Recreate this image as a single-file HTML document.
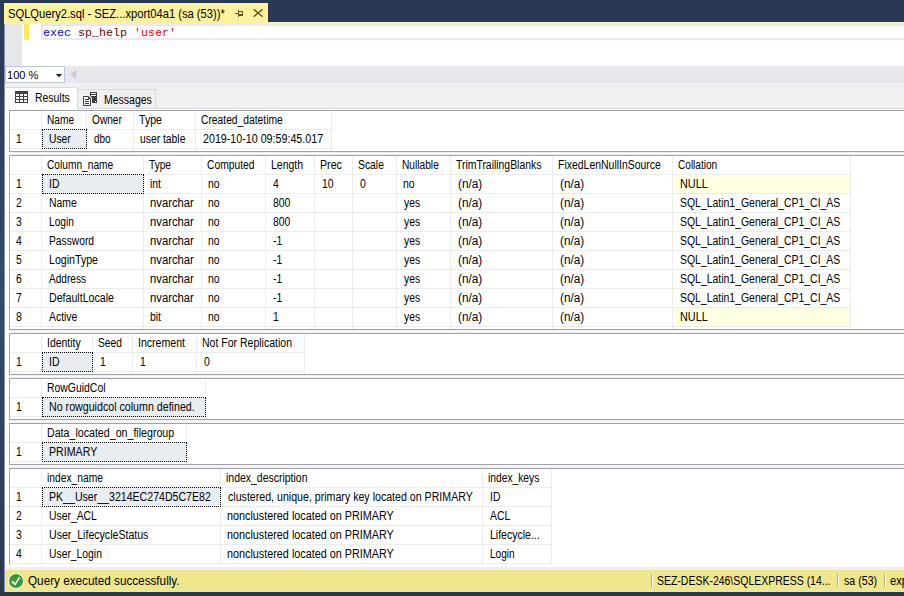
<!DOCTYPE html><html><head><meta charset="utf-8"><title>SQLQuery2.sql</title><style>
html,body{margin:0;padding:0;}body{width:904px;height:596px;overflow:hidden;position:relative;background:#fff;}
.r{position:absolute;}
.t{position:absolute;white-space:pre;line-height:1;transform-origin:0 50%;display:block;}
</style></head><body>
<div class="r" style="left:0px;top:0px;width:904px;height:22px;background:#293955;"></div>
<div class="r" style="left:4px;top:3px;width:264px;height:19px;background:#FFF29D;"></div>
<div class="r" style="left:4px;top:22px;width:900px;height:2px;background:#FFF29D;"></div>
<div class="r" style="left:4px;top:24px;width:900px;height:42px;background:#FFFFFF;"></div>
<div class="r" style="left:4px;top:24px;width:18px;height:42px;background:#E6E7E8;"></div>
<div class="r" style="left:24.3px;top:24px;width:5.2px;height:16px;background:#FFEC5E;"></div>
<div class="r" style="left:41px;top:24px;width:867px;height:16px;background:transparent;border:2px solid #E8E8F3;box-sizing:border-box;"></div>
<div class="r" style="left:4px;top:66px;width:900px;height:17px;background:#E7E7EC;"></div>
<div class="r" style="left:5px;top:66px;width:60px;height:17px;background:#FFFFFF;border:1px solid #BEC7DD;box-sizing:border-box;"></div>
<div class="r" style="left:4px;top:83px;width:900px;height:487px;background:#F0F0F0;"></div>
<div class="r" style="left:5px;top:109px;width:899px;height:461px;background:#FFFFFF;"></div>
<div class="r" style="left:5px;top:87px;width:73px;height:22px;background:#FFFFFF;border:1px solid #DADADA;border-bottom:none;border-left-color:#F4F4F4;box-sizing:border-box;"></div>
<div class="r" style="left:78px;top:89px;width:78px;height:20px;background:#F0F0F0;border:1px solid #DADADA;border-left:none;box-sizing:border-box;"></div>
<div class="r" style="left:156px;top:108px;width:748px;height:1px;background:#DDDDDD;"></div>
<div class="r" style="left:9px;top:110px;width:897px;height:42px;background:#FFFFFF;border:1px solid #A0A3AB;box-sizing:border-box;"></div>
<div class="r" style="left:10px;top:129px;width:322px;height:1px;background:#EDEDED;"></div>
<div class="r" style="left:10px;top:148px;width:322px;height:1px;background:#EDEDED;"></div>
<div class="r" style="left:41px;top:111px;width:1px;height:40px;background:#EDEDED;"></div>
<div class="r" style="left:86px;top:111px;width:1px;height:40px;background:#EDEDED;"></div>
<div class="r" style="left:133px;top:111px;width:1px;height:40px;background:#EDEDED;"></div>
<div class="r" style="left:195px;top:111px;width:1px;height:40px;background:#EDEDED;"></div>
<div class="r" style="left:331px;top:111px;width:1px;height:40px;background:#EDEDED;"></div>
<div class="r" style="left:9px;top:152px;width:895px;height:3px;background:#F0F0F0;"></div>
<div class="r" style="left:9px;top:153px;width:895px;height:1px;background:#FAFAFA;"></div>
<div class="r" style="left:42px;top:129px;width:45px;height:20px;background:#E8EDF1;border:1px dotted #000;box-sizing:border-box;"></div>
<div class="r" style="left:9px;top:155px;width:897px;height:175px;background:#FFFFFF;border:1px solid #A0A3AB;box-sizing:border-box;"></div>
<div class="r" style="left:10px;top:174px;width:841px;height:1px;background:#EDEDED;"></div>
<div class="r" style="left:10px;top:193px;width:841px;height:1px;background:#EDEDED;"></div>
<div class="r" style="left:10px;top:212px;width:841px;height:1px;background:#EDEDED;"></div>
<div class="r" style="left:10px;top:231px;width:841px;height:1px;background:#EDEDED;"></div>
<div class="r" style="left:10px;top:250px;width:841px;height:1px;background:#EDEDED;"></div>
<div class="r" style="left:10px;top:269px;width:841px;height:1px;background:#EDEDED;"></div>
<div class="r" style="left:10px;top:288px;width:841px;height:1px;background:#EDEDED;"></div>
<div class="r" style="left:10px;top:307px;width:841px;height:1px;background:#EDEDED;"></div>
<div class="r" style="left:10px;top:326px;width:841px;height:1px;background:#EDEDED;"></div>
<div class="r" style="left:41px;top:156px;width:1px;height:173px;background:#EDEDED;"></div>
<div class="r" style="left:143px;top:156px;width:1px;height:173px;background:#EDEDED;"></div>
<div class="r" style="left:201px;top:156px;width:1px;height:173px;background:#EDEDED;"></div>
<div class="r" style="left:265px;top:156px;width:1px;height:173px;background:#EDEDED;"></div>
<div class="r" style="left:314px;top:156px;width:1px;height:173px;background:#EDEDED;"></div>
<div class="r" style="left:352px;top:156px;width:1px;height:173px;background:#EDEDED;"></div>
<div class="r" style="left:396px;top:156px;width:1px;height:173px;background:#EDEDED;"></div>
<div class="r" style="left:450px;top:156px;width:1px;height:173px;background:#EDEDED;"></div>
<div class="r" style="left:552px;top:156px;width:1px;height:173px;background:#EDEDED;"></div>
<div class="r" style="left:672px;top:156px;width:1px;height:173px;background:#EDEDED;"></div>
<div class="r" style="left:850px;top:156px;width:1px;height:173px;background:#EDEDED;"></div>
<div class="r" style="left:9px;top:330px;width:895px;height:3px;background:#F0F0F0;"></div>
<div class="r" style="left:9px;top:331px;width:895px;height:1px;background:#FAFAFA;"></div>
<div class="r" style="left:673px;top:175px;width:177px;height:18px;background:#FFFFE1;"></div>
<div class="r" style="left:673px;top:308px;width:177px;height:18px;background:#FFFFE1;"></div>
<div class="r" style="left:42px;top:174px;width:102px;height:20px;background:#E8EDF1;border:1px dotted #000;box-sizing:border-box;"></div>
<div class="r" style="left:9px;top:333px;width:897px;height:42px;background:#FFFFFF;border:1px solid #A0A3AB;box-sizing:border-box;"></div>
<div class="r" style="left:10px;top:352px;width:295px;height:1px;background:#EDEDED;"></div>
<div class="r" style="left:10px;top:371px;width:295px;height:1px;background:#EDEDED;"></div>
<div class="r" style="left:41px;top:334px;width:1px;height:40px;background:#EDEDED;"></div>
<div class="r" style="left:92px;top:334px;width:1px;height:40px;background:#EDEDED;"></div>
<div class="r" style="left:132px;top:334px;width:1px;height:40px;background:#EDEDED;"></div>
<div class="r" style="left:196px;top:334px;width:1px;height:40px;background:#EDEDED;"></div>
<div class="r" style="left:304px;top:334px;width:1px;height:40px;background:#EDEDED;"></div>
<div class="r" style="left:9px;top:375px;width:895px;height:3px;background:#F0F0F0;"></div>
<div class="r" style="left:9px;top:376px;width:895px;height:1px;background:#FAFAFA;"></div>
<div class="r" style="left:42px;top:352px;width:51px;height:20px;background:#E8EDF1;border:1px dotted #000;box-sizing:border-box;"></div>
<div class="r" style="left:9px;top:378px;width:897px;height:42px;background:#FFFFFF;border:1px solid #A0A3AB;box-sizing:border-box;"></div>
<div class="r" style="left:10px;top:397px;width:196px;height:1px;background:#EDEDED;"></div>
<div class="r" style="left:10px;top:416px;width:196px;height:1px;background:#EDEDED;"></div>
<div class="r" style="left:41px;top:379px;width:1px;height:40px;background:#EDEDED;"></div>
<div class="r" style="left:205px;top:379px;width:1px;height:40px;background:#EDEDED;"></div>
<div class="r" style="left:9px;top:420px;width:895px;height:3px;background:#F0F0F0;"></div>
<div class="r" style="left:9px;top:421px;width:895px;height:1px;background:#FAFAFA;"></div>
<div class="r" style="left:42px;top:397px;width:164px;height:20px;background:#E8EDF1;border:1px dotted #000;box-sizing:border-box;"></div>
<div class="r" style="left:9px;top:423px;width:897px;height:42px;background:#FFFFFF;border:1px solid #A0A3AB;box-sizing:border-box;"></div>
<div class="r" style="left:10px;top:442px;width:177px;height:1px;background:#EDEDED;"></div>
<div class="r" style="left:10px;top:461px;width:177px;height:1px;background:#EDEDED;"></div>
<div class="r" style="left:41px;top:424px;width:1px;height:40px;background:#EDEDED;"></div>
<div class="r" style="left:186px;top:424px;width:1px;height:40px;background:#EDEDED;"></div>
<div class="r" style="left:9px;top:465px;width:895px;height:3px;background:#F0F0F0;"></div>
<div class="r" style="left:9px;top:466px;width:895px;height:1px;background:#FAFAFA;"></div>
<div class="r" style="left:42px;top:442px;width:145px;height:20px;background:#E8EDF1;border:1px dotted #000;box-sizing:border-box;"></div>
<div class="r" style="left:9px;top:468px;width:897px;height:97px;background:#FFFFFF;border:1px solid #A0A3AB;box-sizing:border-box;border-bottom:none;"></div>
<div class="r" style="left:10px;top:487px;width:542px;height:1px;background:#EDEDED;"></div>
<div class="r" style="left:10px;top:506px;width:542px;height:1px;background:#EDEDED;"></div>
<div class="r" style="left:10px;top:525px;width:542px;height:1px;background:#EDEDED;"></div>
<div class="r" style="left:10px;top:544px;width:542px;height:1px;background:#EDEDED;"></div>
<div class="r" style="left:10px;top:563px;width:542px;height:1px;background:#EDEDED;"></div>
<div class="r" style="left:41px;top:469px;width:1px;height:96px;background:#EDEDED;"></div>
<div class="r" style="left:220px;top:469px;width:1px;height:96px;background:#EDEDED;"></div>
<div class="r" style="left:482px;top:469px;width:1px;height:96px;background:#EDEDED;"></div>
<div class="r" style="left:551px;top:469px;width:1px;height:96px;background:#EDEDED;"></div>
<div class="r" style="left:42px;top:487px;width:179px;height:20px;background:#E8EDF1;border:1px dotted #000;box-sizing:border-box;"></div>
<div class="r" style="left:5px;top:565px;width:899px;height:2px;background:#FFFFFF;"></div>
<div class="r" style="left:4px;top:567px;width:900px;height:3px;background:#F0F0F0;"></div>
<div class="r" style="left:4px;top:570px;width:900px;height:22px;background:#F0E68C;"></div>
<div class="r" style="left:0px;top:592px;width:904px;height:4px;background:#293955;"></div>
<div class="r" style="left:0px;top:0px;width:4px;height:596px;background:linear-gradient(#293955,#35496A 50%,#293955);"></div>
<div class="r" style="left:4px;top:24px;width:1px;height:568px;background:#8A94AE;"></div>
<div class="r" style="left:651px;top:574px;width:1px;height:13px;background:#B8B090;"></div>
<div class="r" style="left:652px;top:574px;width:1px;height:13px;background:#FFFFF0;"></div>
<div class="r" style="left:837px;top:574px;width:1px;height:13px;background:#B8B090;"></div>
<div class="r" style="left:838px;top:574px;width:1px;height:13px;background:#FFFFF0;"></div>
<div class="r" style="left:884px;top:574px;width:1px;height:13px;background:#B8B090;"></div>
<div class="r" style="left:885px;top:574px;width:1px;height:13px;background:#FFFFF0;"></div>
<svg style="position:absolute;left:55px;top:73px" width="8" height="5" viewBox="0 0 8 5"><path d="M0.8 0.9h6.4l-3.2 3.3z" fill="#1C2034"/></svg>
<svg style="position:absolute;left:70px;top:69px" width="7" height="11" viewBox="0 0 7 11"><path d="M6 0.8v9L0.8 5.3z" fill="#C8C9D3"/></svg>
<svg style="position:absolute;left:15px;top:91px" width="13" height="12" viewBox="0 0 13 12"><rect x="0" y="0" width="13" height="12" fill="#424242"/><rect x="1" y="3" width="3" height="2" fill="#fff"/><rect x="1" y="6" width="3" height="2" fill="#fff"/><rect x="1" y="9" width="3" height="2" fill="#fff"/><rect x="5" y="3" width="3" height="2" fill="#fff"/><rect x="5" y="6" width="3" height="2" fill="#fff"/><rect x="5" y="9" width="3" height="2" fill="#fff"/><rect x="9" y="3" width="3" height="2" fill="#fff"/><rect x="9" y="6" width="3" height="2" fill="#fff"/><rect x="9" y="9" width="3" height="2" fill="#fff"/></svg>
<svg style="position:absolute;left:82px;top:92px" width="16" height="15" viewBox="0 0 16 15" shape-rendering="crispEdges"><rect x="8" y="0" width="7" height="11" fill="#3B3B3B"/><rect x="9" y="1" width="5" height="1" fill="#FFFFFF"/><rect x="9" y="3" width="5" height="1" fill="#FFFFFF"/><rect x="13" y="9" width="1" height="1" fill="#FFFFFF"/><g shape-rendering="geometricPrecision"><path d="M1.5 4.5h5l2 2v7h-7z" fill="#FFFFFF" stroke="#F6F6F6" stroke-width="3" stroke-linejoin="miter"/><path d="M1.5 4.5h5l2 2v7h-7z" fill="#FFFFFF" stroke="#3B3B3B" stroke-width="1"/><path d="M6 4.5v2.5h2.5" fill="#3B3B3B" stroke="none"/></g><rect x="3" y="7" width="4" height="1" fill="#3B3B3B"/><rect x="3" y="9" width="4" height="1" fill="#3B3B3B"/><rect x="3" y="11" width="4" height="1" fill="#3B3B3B"/></svg>
<svg style="position:absolute;left:8px;top:573.2px" width="16" height="16" viewBox="0 0 16 16"><circle cx="8" cy="8" r="7.9" fill="#FBFBF4"/><circle cx="8" cy="8" r="7" fill="#369A36"/><path d="M3.2 9.2L4.9 7.6L7.0 9.9L10.8 3.9L12.2 4.6L7.3 12.8Z" fill="#fff"/></svg>
<svg style="position:absolute;left:234px;top:9px" width="10" height="9" viewBox="0 0 10 9" shape-rendering="crispEdges"><rect x="1" y="4" width="3" height="1" fill="#5A5535"/><rect x="4" y="1" width="1" height="7" fill="#5A5535"/><rect x="5" y="2" width="4" height="1" fill="#5A5535"/><rect x="8" y="2" width="1" height="5" fill="#5A5535"/><rect x="5" y="5" width="4" height="2" fill="#5A5535"/></svg>
<svg style="position:absolute;left:252px;top:8px" width="12" height="10" viewBox="0 0 12 10"><path d="M1.7 1.3l8.9 7.5M10.6 1.3L1.7 8.8" fill="none" stroke="#5A5535" stroke-width="1.45"/></svg>
<span class="t" style="left:8.00px;top:8px;font:12px/1 'Liberation Sans', sans-serif;color:#000;transform:scaleX(0.9314)">SQLQuery2.sql - SEZ...xport04a1 (sa (53))*</span>
<span class="t" style="left:42.70px;top:28px;font:11.7px/1 'Liberation Mono', monospace;color:#0000FF;transform:scaleX(0.9978)">exec</span>
<span class="t" style="left:77.70px;top:28px;font:11.7px/1 'Liberation Mono', monospace;color:#800000;transform:scaleX(0.9978)">sp_help</span>
<span class="t" style="left:133.70px;top:28px;font:11.7px/1 'Liberation Mono', monospace;color:#FF0000;transform:scaleX(0.9978)">&#x27;user&#x27;</span>
<span class="t" style="left:7.30px;top:70px;font:11px/1 'Liberation Sans', sans-serif;color:#000;transform:scaleX(1.0063)">100 %</span>
<span class="t" style="left:34.80px;top:92px;font:12.5px/1 'Liberation Sans', sans-serif;color:#000;transform:scaleX(0.8348)">Results</span>
<span class="t" style="left:103.60px;top:94px;font:12.5px/1 'Liberation Sans', sans-serif;color:#000;transform:scaleX(0.8388)">Messages</span>
<span class="t" style="left:47.00px;top:114px;font:12.5px/1 'Liberation Sans', sans-serif;color:#000;transform:scaleX(0.8127)">Name</span>
<span class="t" style="left:92.00px;top:114px;font:12.5px/1 'Liberation Sans', sans-serif;color:#000;transform:scaleX(0.8119)">Owner</span>
<span class="t" style="left:139.00px;top:114px;font:12.5px/1 'Liberation Sans', sans-serif;color:#000;transform:scaleX(0.8484)">Type</span>
<span class="t" style="left:201.00px;top:114px;font:12.5px/1 'Liberation Sans', sans-serif;color:#000;transform:scaleX(0.8221)">Created_datetime</span>
<span class="t" style="left:15.50px;top:133px;font:12.5px/1 'Liberation Sans', sans-serif;color:#000;transform:scaleX(0.8316)">1</span>
<span class="t" style="left:49.00px;top:133px;font:12.5px/1 'Liberation Sans', sans-serif;color:#000;transform:scaleX(0.8218)">User</span>
<span class="t" style="left:94.00px;top:133px;font:12.5px/1 'Liberation Sans', sans-serif;color:#000;transform:scaleX(0.7958)">dbo</span>
<span class="t" style="left:140.20px;top:133px;font:12.5px/1 'Liberation Sans', sans-serif;color:#000;transform:scaleX(0.8269)">user table</span>
<span class="t" style="left:203.00px;top:133px;font:12.5px/1 'Liberation Sans', sans-serif;color:#000;transform:scaleX(0.8554)">2019-10-10 09:59:45.017</span>
<span class="t" style="left:47.00px;top:159px;font:12.5px/1 'Liberation Sans', sans-serif;color:#000;transform:scaleX(0.8143)">Column_name</span>
<span class="t" style="left:149.00px;top:159px;font:12.5px/1 'Liberation Sans', sans-serif;color:#000;transform:scaleX(0.8115)">Type</span>
<span class="t" style="left:207.00px;top:159px;font:12.5px/1 'Liberation Sans', sans-serif;color:#000;transform:scaleX(0.8234)">Computed</span>
<span class="t" style="left:271.00px;top:159px;font:12.5px/1 'Liberation Sans', sans-serif;color:#000;transform:scaleX(0.8396)">Length</span>
<span class="t" style="left:320.00px;top:159px;font:12.5px/1 'Liberation Sans', sans-serif;color:#000;transform:scaleX(0.8520)">Prec</span>
<span class="t" style="left:358.00px;top:159px;font:12.5px/1 'Liberation Sans', sans-serif;color:#000;transform:scaleX(0.8280)">Scale</span>
<span class="t" style="left:402.00px;top:159px;font:12.5px/1 'Liberation Sans', sans-serif;color:#000;transform:scaleX(0.8147)">Nullable</span>
<span class="t" style="left:456.00px;top:159px;font:12.5px/1 'Liberation Sans', sans-serif;color:#000;transform:scaleX(0.8325)">TrimTrailingBlanks</span>
<span class="t" style="left:558.00px;top:159px;font:12.5px/1 'Liberation Sans', sans-serif;color:#000;transform:scaleX(0.8366)">FixedLenNullInSource</span>
<span class="t" style="left:678.00px;top:159px;font:12.5px/1 'Liberation Sans', sans-serif;color:#000;transform:scaleX(0.8059)">Collation</span>
<span class="t" style="left:15.50px;top:178px;font:12.5px/1 'Liberation Sans', sans-serif;color:#000;transform:scaleX(0.8316)">1</span>
<span class="t" style="left:49.00px;top:178px;font:12.5px/1 'Liberation Sans', sans-serif;color:#000;transform:scaleX(0.8316)">ID</span>
<span class="t" style="left:150.20px;top:178px;font:12.5px/1 'Liberation Sans', sans-serif;color:#000;transform:scaleX(0.8316)">int</span>
<span class="t" style="left:208.20px;top:178px;font:12.5px/1 'Liberation Sans', sans-serif;color:#000;transform:scaleX(0.8316)">no</span>
<span class="t" style="left:273.00px;top:178px;font:12.5px/1 'Liberation Sans', sans-serif;color:#000;transform:scaleX(0.8316)">4</span>
<span class="t" style="left:322.00px;top:178px;font:12.5px/1 'Liberation Sans', sans-serif;color:#000;transform:scaleX(0.8316)">10</span>
<span class="t" style="left:360.00px;top:178px;font:12.5px/1 'Liberation Sans', sans-serif;color:#000;transform:scaleX(0.8316)">0</span>
<span class="t" style="left:403.20px;top:178px;font:12.5px/1 'Liberation Sans', sans-serif;color:#000;transform:scaleX(0.8316)">no</span>
<span class="t" style="left:458.00px;top:178px;font:12.5px/1 'Liberation Sans', sans-serif;color:#000;transform:scaleX(0.9415)">(n/a)</span>
<span class="t" style="left:560.00px;top:178px;font:12.5px/1 'Liberation Sans', sans-serif;color:#000;transform:scaleX(0.9415)">(n/a)</span>
<span class="t" style="left:680.00px;top:178px;font:12.5px/1 'Liberation Sans', sans-serif;color:#000;transform:scaleX(0.8696)">NULL</span>
<span class="t" style="left:15.50px;top:197px;font:12.5px/1 'Liberation Sans', sans-serif;color:#000;transform:scaleX(0.8316)">2</span>
<span class="t" style="left:49.00px;top:197px;font:12.5px/1 'Liberation Sans', sans-serif;color:#000;transform:scaleX(0.8316)">Name</span>
<span class="t" style="left:150.20px;top:197px;font:12.5px/1 'Liberation Sans', sans-serif;color:#000;transform:scaleX(0.9005)">nvarchar</span>
<span class="t" style="left:208.20px;top:197px;font:12.5px/1 'Liberation Sans', sans-serif;color:#000;transform:scaleX(0.8316)">no</span>
<span class="t" style="left:273.00px;top:197px;font:12.5px/1 'Liberation Sans', sans-serif;color:#000;transform:scaleX(0.8316)">800</span>
<span class="t" style="left:404.00px;top:197px;font:12.5px/1 'Liberation Sans', sans-serif;color:#000;transform:scaleX(0.8316)">yes</span>
<span class="t" style="left:458.00px;top:197px;font:12.5px/1 'Liberation Sans', sans-serif;color:#000;transform:scaleX(0.9415)">(n/a)</span>
<span class="t" style="left:560.00px;top:197px;font:12.5px/1 'Liberation Sans', sans-serif;color:#000;transform:scaleX(0.9415)">(n/a)</span>
<span class="t" style="left:680.00px;top:197px;font:12.5px/1 'Liberation Sans', sans-serif;color:#000;transform:scaleX(0.8358)">SQL_Latin1_General_CP1_CI_AS</span>
<span class="t" style="left:15.50px;top:216px;font:12.5px/1 'Liberation Sans', sans-serif;color:#000;transform:scaleX(0.8316)">3</span>
<span class="t" style="left:49.00px;top:216px;font:12.5px/1 'Liberation Sans', sans-serif;color:#000;transform:scaleX(0.8172)">Login</span>
<span class="t" style="left:150.20px;top:216px;font:12.5px/1 'Liberation Sans', sans-serif;color:#000;transform:scaleX(0.9005)">nvarchar</span>
<span class="t" style="left:208.20px;top:216px;font:12.5px/1 'Liberation Sans', sans-serif;color:#000;transform:scaleX(0.8316)">no</span>
<span class="t" style="left:273.00px;top:216px;font:12.5px/1 'Liberation Sans', sans-serif;color:#000;transform:scaleX(0.8316)">800</span>
<span class="t" style="left:404.00px;top:216px;font:12.5px/1 'Liberation Sans', sans-serif;color:#000;transform:scaleX(0.8316)">yes</span>
<span class="t" style="left:458.00px;top:216px;font:12.5px/1 'Liberation Sans', sans-serif;color:#000;transform:scaleX(0.9415)">(n/a)</span>
<span class="t" style="left:560.00px;top:216px;font:12.5px/1 'Liberation Sans', sans-serif;color:#000;transform:scaleX(0.9415)">(n/a)</span>
<span class="t" style="left:680.00px;top:216px;font:12.5px/1 'Liberation Sans', sans-serif;color:#000;transform:scaleX(0.8358)">SQL_Latin1_General_CP1_CI_AS</span>
<span class="t" style="left:15.50px;top:235px;font:12.5px/1 'Liberation Sans', sans-serif;color:#000;transform:scaleX(0.8316)">4</span>
<span class="t" style="left:49.00px;top:235px;font:12.5px/1 'Liberation Sans', sans-serif;color:#000;transform:scaleX(0.8198)">Password</span>
<span class="t" style="left:150.20px;top:235px;font:12.5px/1 'Liberation Sans', sans-serif;color:#000;transform:scaleX(0.9005)">nvarchar</span>
<span class="t" style="left:208.20px;top:235px;font:12.5px/1 'Liberation Sans', sans-serif;color:#000;transform:scaleX(0.8316)">no</span>
<span class="t" style="left:273.00px;top:235px;font:12.5px/1 'Liberation Sans', sans-serif;color:#000;transform:scaleX(0.8316)">-1</span>
<span class="t" style="left:404.00px;top:235px;font:12.5px/1 'Liberation Sans', sans-serif;color:#000;transform:scaleX(0.8316)">yes</span>
<span class="t" style="left:458.00px;top:235px;font:12.5px/1 'Liberation Sans', sans-serif;color:#000;transform:scaleX(0.9415)">(n/a)</span>
<span class="t" style="left:560.00px;top:235px;font:12.5px/1 'Liberation Sans', sans-serif;color:#000;transform:scaleX(0.9415)">(n/a)</span>
<span class="t" style="left:680.00px;top:235px;font:12.5px/1 'Liberation Sans', sans-serif;color:#000;transform:scaleX(0.8358)">SQL_Latin1_General_CP1_CI_AS</span>
<span class="t" style="left:15.50px;top:254px;font:12.5px/1 'Liberation Sans', sans-serif;color:#000;transform:scaleX(0.8316)">5</span>
<span class="t" style="left:49.00px;top:254px;font:12.5px/1 'Liberation Sans', sans-serif;color:#000;transform:scaleX(0.8494)">LoginType</span>
<span class="t" style="left:150.20px;top:254px;font:12.5px/1 'Liberation Sans', sans-serif;color:#000;transform:scaleX(0.9005)">nvarchar</span>
<span class="t" style="left:208.20px;top:254px;font:12.5px/1 'Liberation Sans', sans-serif;color:#000;transform:scaleX(0.8316)">no</span>
<span class="t" style="left:273.00px;top:254px;font:12.5px/1 'Liberation Sans', sans-serif;color:#000;transform:scaleX(0.8316)">-1</span>
<span class="t" style="left:404.00px;top:254px;font:12.5px/1 'Liberation Sans', sans-serif;color:#000;transform:scaleX(0.8316)">yes</span>
<span class="t" style="left:458.00px;top:254px;font:12.5px/1 'Liberation Sans', sans-serif;color:#000;transform:scaleX(0.9415)">(n/a)</span>
<span class="t" style="left:560.00px;top:254px;font:12.5px/1 'Liberation Sans', sans-serif;color:#000;transform:scaleX(0.9415)">(n/a)</span>
<span class="t" style="left:680.00px;top:254px;font:12.5px/1 'Liberation Sans', sans-serif;color:#000;transform:scaleX(0.8358)">SQL_Latin1_General_CP1_CI_AS</span>
<span class="t" style="left:15.50px;top:273px;font:12.5px/1 'Liberation Sans', sans-serif;color:#000;transform:scaleX(0.8316)">6</span>
<span class="t" style="left:49.00px;top:273px;font:12.5px/1 'Liberation Sans', sans-serif;color:#000;transform:scaleX(0.8068)">Address</span>
<span class="t" style="left:150.20px;top:273px;font:12.5px/1 'Liberation Sans', sans-serif;color:#000;transform:scaleX(0.9005)">nvarchar</span>
<span class="t" style="left:208.20px;top:273px;font:12.5px/1 'Liberation Sans', sans-serif;color:#000;transform:scaleX(0.8316)">no</span>
<span class="t" style="left:273.00px;top:273px;font:12.5px/1 'Liberation Sans', sans-serif;color:#000;transform:scaleX(0.8316)">-1</span>
<span class="t" style="left:404.00px;top:273px;font:12.5px/1 'Liberation Sans', sans-serif;color:#000;transform:scaleX(0.8316)">yes</span>
<span class="t" style="left:458.00px;top:273px;font:12.5px/1 'Liberation Sans', sans-serif;color:#000;transform:scaleX(0.9415)">(n/a)</span>
<span class="t" style="left:560.00px;top:273px;font:12.5px/1 'Liberation Sans', sans-serif;color:#000;transform:scaleX(0.9415)">(n/a)</span>
<span class="t" style="left:680.00px;top:273px;font:12.5px/1 'Liberation Sans', sans-serif;color:#000;transform:scaleX(0.8358)">SQL_Latin1_General_CP1_CI_AS</span>
<span class="t" style="left:15.50px;top:292px;font:12.5px/1 'Liberation Sans', sans-serif;color:#000;transform:scaleX(0.8316)">7</span>
<span class="t" style="left:49.00px;top:292px;font:12.5px/1 'Liberation Sans', sans-serif;color:#000;transform:scaleX(0.8502)">DefaultLocale</span>
<span class="t" style="left:150.20px;top:292px;font:12.5px/1 'Liberation Sans', sans-serif;color:#000;transform:scaleX(0.9005)">nvarchar</span>
<span class="t" style="left:208.20px;top:292px;font:12.5px/1 'Liberation Sans', sans-serif;color:#000;transform:scaleX(0.8316)">no</span>
<span class="t" style="left:273.00px;top:292px;font:12.5px/1 'Liberation Sans', sans-serif;color:#000;transform:scaleX(0.8316)">-1</span>
<span class="t" style="left:404.00px;top:292px;font:12.5px/1 'Liberation Sans', sans-serif;color:#000;transform:scaleX(0.8316)">yes</span>
<span class="t" style="left:458.00px;top:292px;font:12.5px/1 'Liberation Sans', sans-serif;color:#000;transform:scaleX(0.9415)">(n/a)</span>
<span class="t" style="left:560.00px;top:292px;font:12.5px/1 'Liberation Sans', sans-serif;color:#000;transform:scaleX(0.9415)">(n/a)</span>
<span class="t" style="left:680.00px;top:292px;font:12.5px/1 'Liberation Sans', sans-serif;color:#000;transform:scaleX(0.8358)">SQL_Latin1_General_CP1_CI_AS</span>
<span class="t" style="left:15.50px;top:311px;font:12.5px/1 'Liberation Sans', sans-serif;color:#000;transform:scaleX(0.8316)">8</span>
<span class="t" style="left:49.00px;top:311px;font:12.5px/1 'Liberation Sans', sans-serif;color:#000;transform:scaleX(0.8316)">Active</span>
<span class="t" style="left:150.20px;top:311px;font:12.5px/1 'Liberation Sans', sans-serif;color:#000;transform:scaleX(0.8316)">bit</span>
<span class="t" style="left:208.20px;top:311px;font:12.5px/1 'Liberation Sans', sans-serif;color:#000;transform:scaleX(0.8316)">no</span>
<span class="t" style="left:273.00px;top:311px;font:12.5px/1 'Liberation Sans', sans-serif;color:#000;transform:scaleX(0.8316)">1</span>
<span class="t" style="left:404.00px;top:311px;font:12.5px/1 'Liberation Sans', sans-serif;color:#000;transform:scaleX(0.8316)">yes</span>
<span class="t" style="left:458.00px;top:311px;font:12.5px/1 'Liberation Sans', sans-serif;color:#000;transform:scaleX(0.9415)">(n/a)</span>
<span class="t" style="left:560.00px;top:311px;font:12.5px/1 'Liberation Sans', sans-serif;color:#000;transform:scaleX(0.9415)">(n/a)</span>
<span class="t" style="left:680.00px;top:311px;font:12.5px/1 'Liberation Sans', sans-serif;color:#000;transform:scaleX(0.8696)">NULL</span>
<span class="t" style="left:47.00px;top:337px;font:12.5px/1 'Liberation Sans', sans-serif;color:#000;transform:scaleX(0.8360)">Identity</span>
<span class="t" style="left:98.00px;top:337px;font:12.5px/1 'Liberation Sans', sans-serif;color:#000;transform:scaleX(0.8218)">Seed</span>
<span class="t" style="left:138.00px;top:337px;font:12.5px/1 'Liberation Sans', sans-serif;color:#000;transform:scaleX(0.8454)">Increment</span>
<span class="t" style="left:202.00px;top:337px;font:12.5px/1 'Liberation Sans', sans-serif;color:#000;transform:scaleX(0.8411)">Not For Replication</span>
<span class="t" style="left:15.50px;top:356px;font:12.5px/1 'Liberation Sans', sans-serif;color:#000;transform:scaleX(0.8316)">1</span>
<span class="t" style="left:49.00px;top:356px;font:12.5px/1 'Liberation Sans', sans-serif;color:#000;transform:scaleX(0.8400)">ID</span>
<span class="t" style="left:100.00px;top:356px;font:12.5px/1 'Liberation Sans', sans-serif;color:#000;transform:scaleX(0.8316)">1</span>
<span class="t" style="left:140.00px;top:356px;font:12.5px/1 'Liberation Sans', sans-serif;color:#000;transform:scaleX(0.8316)">1</span>
<span class="t" style="left:204.00px;top:356px;font:12.5px/1 'Liberation Sans', sans-serif;color:#000;transform:scaleX(0.8316)">0</span>
<span class="t" style="left:47.00px;top:382px;font:12.5px/1 'Liberation Sans', sans-serif;color:#000;transform:scaleX(0.8337)">RowGuidCol</span>
<span class="t" style="left:15.50px;top:401px;font:12.5px/1 'Liberation Sans', sans-serif;color:#000;transform:scaleX(0.8316)">1</span>
<span class="t" style="left:49.00px;top:401px;font:12.5px/1 'Liberation Sans', sans-serif;color:#000;transform:scaleX(0.8524)">No rowguidcol column defined.</span>
<span class="t" style="left:47.00px;top:427px;font:12.5px/1 'Liberation Sans', sans-serif;color:#000;transform:scaleX(0.8513)">Data_located_on_filegroup</span>
<span class="t" style="left:15.50px;top:446px;font:12.5px/1 'Liberation Sans', sans-serif;color:#000;transform:scaleX(0.8316)">1</span>
<span class="t" style="left:49.00px;top:446px;font:12.5px/1 'Liberation Sans', sans-serif;color:#000;transform:scaleX(0.8513)">PRIMARY</span>
<span class="t" style="left:47.00px;top:472px;font:12.5px/1 'Liberation Sans', sans-serif;color:#000;transform:scaleX(0.8207)">index_name</span>
<span class="t" style="left:226.00px;top:472px;font:12.5px/1 'Liberation Sans', sans-serif;color:#000;transform:scaleX(0.8376)">index_description</span>
<span class="t" style="left:488.00px;top:472px;font:12.5px/1 'Liberation Sans', sans-serif;color:#000;transform:scaleX(0.8202)">index_keys</span>
<span class="t" style="left:15.50px;top:491px;font:12.5px/1 'Liberation Sans', sans-serif;color:#000;transform:scaleX(0.8316)">1</span>
<span class="t" style="left:49.00px;top:491px;font:12.5px/1 'Liberation Sans', sans-serif;color:#000;transform:scaleX(0.8466)">PK__User__3214EC274D5C7E82</span>
<span class="t" style="left:228.00px;top:491px;font:12.5px/1 'Liberation Sans', sans-serif;color:#000;transform:scaleX(0.8497)">clustered, unique, primary key located on PRIMARY</span>
<span class="t" style="left:490.00px;top:491px;font:12.5px/1 'Liberation Sans', sans-serif;color:#000;transform:scaleX(0.8316)">ID</span>
<span class="t" style="left:15.50px;top:510px;font:12.5px/1 'Liberation Sans', sans-serif;color:#000;transform:scaleX(0.8316)">2</span>
<span class="t" style="left:49.00px;top:510px;font:12.5px/1 'Liberation Sans', sans-serif;color:#000;transform:scaleX(0.8306)">User_ACL</span>
<span class="t" style="left:227.20px;top:510px;font:12.5px/1 'Liberation Sans', sans-serif;color:#000;transform:scaleX(0.8645)">nonclustered located on PRIMARY</span>
<span class="t" style="left:490.00px;top:510px;font:12.5px/1 'Liberation Sans', sans-serif;color:#000;transform:scaleX(0.8316)">ACL</span>
<span class="t" style="left:15.50px;top:529px;font:12.5px/1 'Liberation Sans', sans-serif;color:#000;transform:scaleX(0.8316)">3</span>
<span class="t" style="left:49.00px;top:529px;font:12.5px/1 'Liberation Sans', sans-serif;color:#000;transform:scaleX(0.8465)">User_LifecycleStatus</span>
<span class="t" style="left:227.20px;top:529px;font:12.5px/1 'Liberation Sans', sans-serif;color:#000;transform:scaleX(0.8645)">nonclustered located on PRIMARY</span>
<span class="t" style="left:490.00px;top:529px;font:12.5px/1 'Liberation Sans', sans-serif;color:#000;transform:scaleX(0.8415)">Lifecycle...</span>
<span class="t" style="left:15.50px;top:548px;font:12.5px/1 'Liberation Sans', sans-serif;color:#000;transform:scaleX(0.8316)">4</span>
<span class="t" style="left:49.00px;top:548px;font:12.5px/1 'Liberation Sans', sans-serif;color:#000;transform:scaleX(0.8274)">User_Login</span>
<span class="t" style="left:227.20px;top:548px;font:12.5px/1 'Liberation Sans', sans-serif;color:#000;transform:scaleX(0.8645)">nonclustered located on PRIMARY</span>
<span class="t" style="left:490.00px;top:548px;font:12.5px/1 'Liberation Sans', sans-serif;color:#000;transform:scaleX(0.8041)">Login</span>
<span class="t" style="left:27.60px;top:575px;font:12px/1 'Liberation Sans', sans-serif;color:#000;transform:scaleX(0.9769)">Query executed successfully.</span>
<span class="t" style="left:657.00px;top:575px;font:12px/1 'Liberation Sans', sans-serif;color:#000;transform:scaleX(0.8730)">SEZ-DESK-246\SQLEXPRESS (14...</span>
<span class="t" style="left:843.50px;top:575px;font:12px/1 'Liberation Sans', sans-serif;color:#000;transform:scaleX(0.8860)">sa (53)</span>
<span class="t" style="left:889.60px;top:575px;font:12px/1 'Liberation Sans', sans-serif;color:#000;transform:scaleX(0.9300)">export04a1</span>
</body></html>
